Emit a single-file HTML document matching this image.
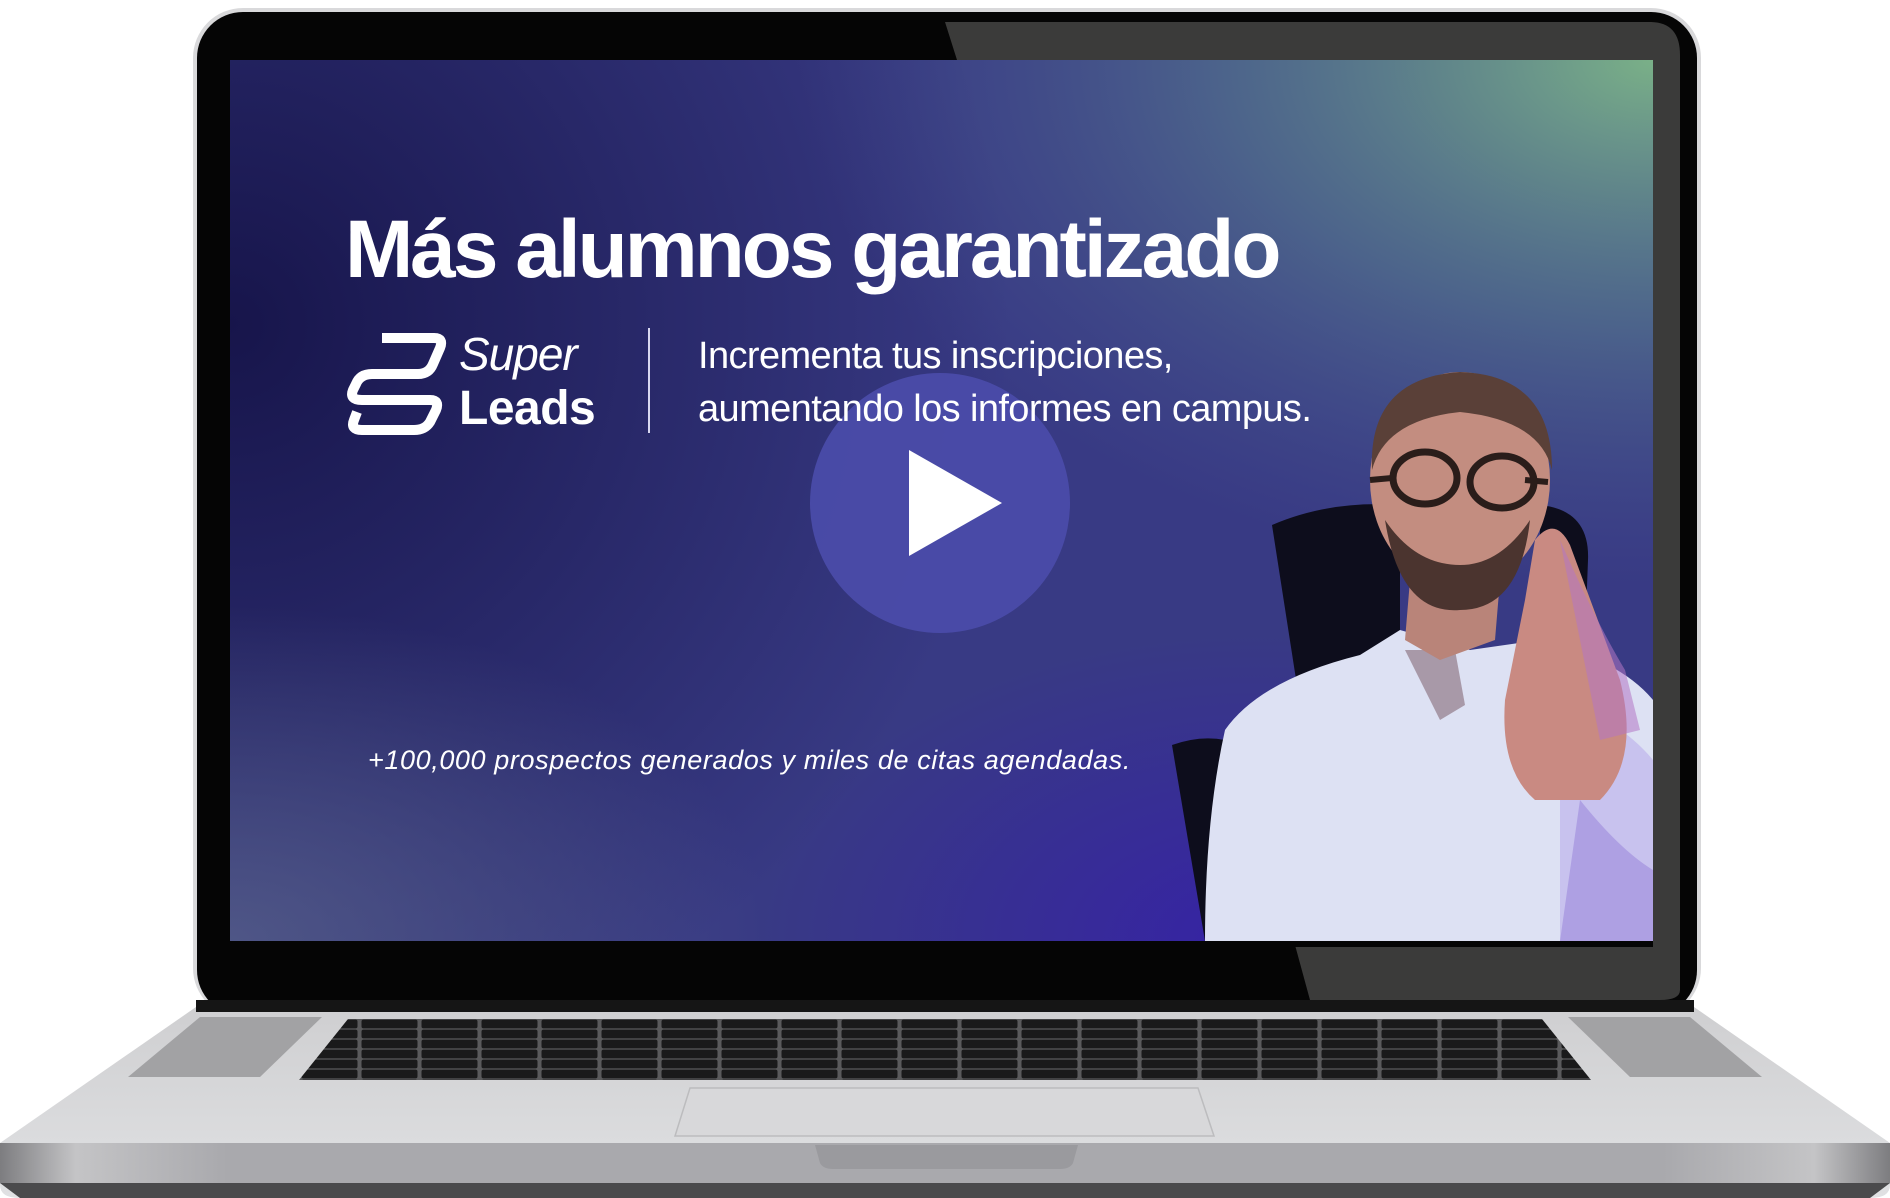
<!DOCTYPE html>
<html><head><meta charset="utf-8"><style>
html,body{margin:0;padding:0;background:#fff;}
#w{position:relative;width:1890px;height:1198px;overflow:hidden;background:#fff;font-family:"Liberation Sans",sans-serif;}
svg{position:absolute;left:0;top:0;}
.t{position:absolute;color:#fff;white-space:nowrap;}
</style></head><body><div id="w">
<svg width="1890" height="1198" viewBox="0 0 1890 1198">
<defs>
<radialGradient id="g1" cx="0" cy="0.3" r="0.55" gradientTransform="translate(0,0.3) scale(1,1.6) translate(0,-0.3)">
<stop offset="0" stop-color="#17154b" stop-opacity="1"/>
<stop offset="1" stop-color="#17154b" stop-opacity="0"/>
</radialGradient>
<radialGradient id="g2" cx="0" cy="1" r="0.38">
<stop offset="0" stop-color="#525a88" stop-opacity="0.9"/>
<stop offset="1" stop-color="#525a88" stop-opacity="0"/>
</radialGradient>
<radialGradient id="g3" cx="1" cy="0" r="0.6">
<stop offset="0" stop-color="#7ab088" stop-opacity="1"/>
<stop offset="0.5" stop-color="#5a8090" stop-opacity="0.6"/>
<stop offset="1" stop-color="#4a5a92" stop-opacity="0"/>
</radialGradient>
<radialGradient id="g4" cx="0.72" cy="1" r="0.35">
<stop offset="0" stop-color="#3620a8" stop-opacity="0.9"/>
<stop offset="1" stop-color="#3620a8" stop-opacity="0"/>
</radialGradient>
<linearGradient id="deck" x1="0" y1="0" x2="0" y2="1">
<stop offset="0" stop-color="#cfcfd1"/><stop offset="1" stop-color="#e0e1e3"/>
</linearGradient>
<linearGradient id="lip" x1="0" y1="0" x2="1" y2="0">
<stop offset="0" stop-color="#7d7d80"/><stop offset="0.04" stop-color="#c4c4c6"/><stop offset="0.12" stop-color="#a9a9ad"/><stop offset="0.88" stop-color="#a9a9ad"/><stop offset="0.96" stop-color="#c4c4c6"/><stop offset="1" stop-color="#7d7d80"/>
</linearGradient>
<clipPath id="sc"><rect x="230" y="60" width="1423" height="881"/></clipPath>
<pattern id="keys" x="0" y="1019" width="60" height="10" patternUnits="userSpaceOnUse">
<rect width="60" height="10" fill="#5a5a5c"/>
<rect x="1.5" y="0.6" width="56" height="8.8" rx="2" fill="#1a1a1b"/>
</pattern>
</defs>
<rect x="193" y="8" width="1508" height="1010" rx="50" fill="#d9d9db"/>
<rect x="197" y="12" width="1500" height="1004" rx="46" fill="#050505"/>
<path d="M945,22 L1650,22 Q1680,22 1680,55 L1680,990 Q1680,1000 1660,1000 L1310,1000 L1295,945 L1653,945 L1653,60 L957,60 Z" fill="#3b3b3a"/>
<rect x="230" y="60" width="1423" height="887" fill="#050505"/>
<g clip-path="url(#sc)">
<rect x="230" y="60" width="1423" height="881" fill="#383a84"/>
<rect x="230" y="60" width="1423" height="881" fill="url(#g1)"/>
<rect x="230" y="60" width="1423" height="881" fill="url(#g2)"/>
<rect x="230" y="60" width="1423" height="881" fill="url(#g3)"/>
<rect x="230" y="60" width="1423" height="881" fill="url(#g4)"/>
<path d="M1272,525 Q1330,500 1400,505 L1400,700 L1300,705 Z" fill="#0d0d1c"/>
<path d="M1540,505 Q1590,510 1588,560 L1585,640 L1540,640 Z" fill="#0d0d1c"/>
<path d="M1172,745 Q1200,735 1225,740 L1235,941 L1205,941 Z" fill="#0d0d1c"/>
<path d="M1225,730 Q1260,680 1360,655 L1400,630 L1470,650 L1540,640 Q1620,660 1653,700 L1653,941 L1205,941 Q1205,820 1225,730 Z" fill="#dde1f3"/>
<path d="M1560,700 Q1620,720 1653,760 L1653,941 L1560,941 Z" fill="#c8c2ee"/>
<path d="M1580,800 Q1620,850 1653,870 L1653,941 L1560,941 Z" fill="#9c88dc" opacity="0.6"/>
<path d="M1405,650 L1440,720 L1465,705 L1455,650 Z" fill="#a899a8"/>
<path d="M1410,580 L1500,580 L1495,640 L1440,660 L1405,640 Z" fill="#b98479"/>
<ellipse cx="1460" cy="480" rx="90" ry="108" fill="#c38d80"/>
<path d="M1372,470 Q1368,378 1460,372 Q1552,375 1552,470 Q1540,420 1460,412 Q1385,420 1372,470 Z" fill="#5a4038"/>
<path d="M1385,520 Q1400,615 1460,610 Q1520,610 1530,520 Q1500,565 1460,565 Q1415,565 1385,520 Z" fill="#4b342f"/>
<path d="M1370,480 L1392,478 M1525,480 L1548,482" stroke="#2a1d1a" stroke-width="6"/>
<ellipse cx="1425" cy="478" rx="32" ry="26" fill="none" stroke="#2a1d1a" stroke-width="7"/>
<ellipse cx="1502" cy="482" rx="32" ry="26" fill="none" stroke="#2a1d1a" stroke-width="7"/>
<path d="M1535,540 Q1555,515 1570,545 L1620,680 Q1640,760 1600,800 L1535,800 Q1500,770 1505,700 L1525,600 Z" fill="#c98a82"/>
<path d="M1560,540 Q1595,620 1625,670 L1640,730 L1600,740 Z" fill="#b277c4" opacity="0.55"/>
<circle cx="940" cy="503" r="130" fill="#4b4dab" opacity="0.9"/>
<polygon points="909,450 909,556 1002,503" fill="#fff"/>
</g>
<g fill="none" stroke="#fff" stroke-width="10" stroke-linejoin="round">
<path d="M382,338 L434,338 Q444,338 440,348 L433,364 Q429,374 418,374 L372,374 Q360,374 356,384 L353,390 Q349,400 362,400 L430,400 Q440,400 436,410 L430,422 Q425,430 414,430 L362,430 Q350,430 354,420 L357,412"/>
</g>
<path d="M196,1007 L1694,1007 L1890,1143 L1890,1185 Q1890,1198 1870,1198 L20,1198 Q0,1198 0,1185 L0,1143 Z" fill="url(#deck)"/>
<rect x="0" y="1143" width="1890" height="40" fill="url(#lip)"/>
<path d="M0,1183 L1890,1183 L1870,1198 L20,1198 Z" fill="#4a4a4c"/>
<path d="M815,1145 L1078,1145 L1073,1163 Q1070,1169 1060,1169 L833,1169 Q823,1169 820,1163 Z" fill="#9a9a9e"/>
<rect x="196" y="1000" width="1498" height="12" fill="#151515"/>
<polygon points="348,1019 1542,1019 1591,1080 299,1080" fill="url(#keys)"/>
<polygon points="200,1017 322,1017 260,1077 128,1077" fill="#a2a2a4"/>
<polygon points="1568,1017 1690,1017 1762,1077 1630,1077" fill="#a2a2a4"/>
<polygon points="690,1088 1198,1088 1214,1136 675,1136" fill="#d8d8da" stroke="#bcbcbe" stroke-width="1.5"/>
</svg>
<div class="t" style="left:345px;top:203px;font-size:82px;font-weight:bold;letter-spacing:-3px;">Más alumnos garantizado</div>
<div class="t" style="left:459px;top:327px;font-size:46px;font-style:italic;letter-spacing:-1px;">Super</div>
<div class="t" style="left:459px;top:381px;font-size:48px;font-weight:bold;letter-spacing:-0.5px;">Leads</div>
<div class="t" style="left:648px;top:328px;width:2px;height:105px;background:#d8d8f0;"></div>
<div class="t" style="left:698px;top:330px;font-size:38px;letter-spacing:-0.6px;line-height:53px;">Incrementa tus inscripciones,<br>aumentando los informes en campus.</div>
<div class="t" style="left:368px;top:745px;font-size:27px;font-style:italic;letter-spacing:0.6px;">+100,000 prospectos generados y miles de citas agendadas.</div>
</div></body></html>
